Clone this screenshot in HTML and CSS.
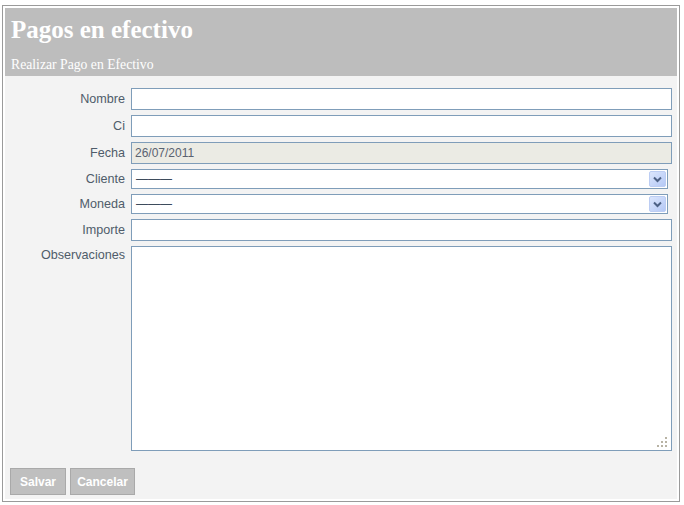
FILE: index.html
```html
<!DOCTYPE html>
<html lang="es">
<head>
<meta charset="utf-8">
<title>Pagos en efectivo</title>
<link rel="stylesheet" href="styles.css">
</head>
<body>
<div class="frame">
  <div class="header">
    <h1 class="title">Pagos en efectivo</h1>
    <div class="subtitle">Realizar Pago en Efectivo</div>
  </div>
  <div class="content">
    <div class="row">
      <label class="label">Nombre</label>
      <div class="input"></div>
    </div>
    <div class="row">
      <label class="label">Ci</label>
      <div class="input"></div>
    </div>
    <div class="row">
      <label class="label">Fecha</label>
      <div class="input disabled">26/07/2011</div>
    </div>
    <div class="row">
      <label class="label">Cliente</label>
      <div class="select"><span class="dash">———</span>
        <svg class="drop" width="17" height="16" viewBox="0 0 17 16"><defs><linearGradient id="g1" x1="0" y1="0" x2="1" y2="1"><stop offset="0" stop-color="#dde7fd"/><stop offset="1" stop-color="#b3c7f5"/></linearGradient></defs><rect x="0.5" y="0.5" width="16" height="15" rx="1.5" fill="url(#g1)" stroke="#bccdf3"/><path d="M5 6.5 L8.5 10 L12 6.5" fill="none" stroke="#4d6185" stroke-width="2"/></svg>
      </div>
    </div>
    <div class="row">
      <label class="label">Moneda</label>
      <div class="select"><span class="dash">———</span>
        <svg class="drop" width="17" height="16" viewBox="0 0 17 16"><defs><linearGradient id="g2" x1="0" y1="0" x2="1" y2="1"><stop offset="0" stop-color="#dde7fd"/><stop offset="1" stop-color="#b3c7f5"/></linearGradient></defs><rect x="0.5" y="0.5" width="16" height="15" rx="1.5" fill="url(#g2)" stroke="#bccdf3"/><path d="M5 6.5 L8.5 10 L12 6.5" fill="none" stroke="#4d6185" stroke-width="2"/></svg>
      </div>
    </div>
    <div class="row">
      <label class="label">Importe</label>
      <div class="input"></div>
    </div>
    <div class="row">
      <label class="label label-top">Observaciones</label>
      <div class="textarea">
        <svg class="grip" width="11" height="11" viewBox="0 0 11 11"><g fill="#b8b3a4"><rect x="8" y="0" width="2" height="2"/><rect x="4" y="4" width="2" height="2"/><rect x="8" y="4" width="2" height="2"/><rect x="0" y="8" width="2" height="2"/><rect x="4" y="8" width="2" height="2"/><rect x="8" y="8" width="2" height="2"/></g></svg>
      </div>
    </div>
    <div class="buttons">
      <button class="btn btn-save">Salvar</button>
      <button class="btn btn-cancel">Cancelar</button>
    </div>
  </div>
</div>
</body>
</html>
```
FILE: styles.css
```css
html, body {
  margin: 0;
  padding: 0;
  background: #ffffff;
}
body {
  padding: 5px 0 0 2px;
  font-family: "Liberation Sans", Arial, sans-serif;
}
.frame {
  box-sizing: border-box;
  width: 678px;
  height: 497px;
  border: 1px solid #9a9a9a;
  padding: 2px;
  background: #ffffff;
  display: flex;
  flex-direction: column;
}
.header {
  background: #bdbdbd;
  height: 68px;
  box-sizing: border-box;
  padding: 8px 0 0 6px;
  color: #ffffff;
}
.title {
  margin: 0;
  font-family: "Liberation Serif", "Times New Roman", serif;
  font-weight: bold;
  font-size: 25px;
  line-height: 28px;
}
.subtitle {
  margin-top: 13px;
  font-family: "Liberation Serif", "Times New Roman", serif;
  font-size: 13.7px;
  line-height: 16px;
}
.content {
  flex: 1;
  background: #f3f3f3;
  padding: 12px 0 0 0;
  display: flex;
  flex-direction: column;
  gap: 5px;
}
.row {
  display: flex;
  align-items: center;
  gap: 6px;
}
.label {
  width: 120px;
  flex: none;
  text-align: right;
  font-size: 12.6px;
  color: #4f5c6a;
}
.label-top {
  align-self: flex-start;
  padding-top: 2px;
}
.input {
  box-sizing: border-box;
  width: 541px;
  height: 22px;
  border: 1px solid #7f9db9;
  background: #ffffff;
  padding: 0 3px;
  font-size: 12px;
  line-height: 20px;
  color: #5a6270;
}
.input.disabled {
  background: #ebebe4;
}
.select {
  box-sizing: border-box;
  width: 537px;
  height: 20px;
  border: 1px solid #7f9db9;
  background: #ffffff;
  display: flex;
  align-items: center;
  justify-content: space-between;
  padding: 0 1px 0 4px;
}
.dash {
  font-size: 12px;
  color: #3d4c5c;
  line-height: 16px;
}
.drop {
  display: block;
}
.textarea {
  position: relative;
  box-sizing: border-box;
  width: 541px;
  height: 205px;
  border: 1px solid #7f9db9;
  background: #ffffff;
}
.grip {
  position: absolute;
  right: 3px;
  bottom: 2px;
}
.buttons {
  display: flex;
  gap: 4px;
  padding: 12px 0 0 5px;
}
.btn {
  box-sizing: border-box;
  height: 27px;
  border: 1px solid #a9a9a9;
  background: #bfbfbf;
  color: #ffffff;
  font-family: "Liberation Sans", Arial, sans-serif;
  font-weight: bold;
  font-size: 12px;
  padding: 0;
}
.btn-save {
  width: 56px;
}
.btn-cancel {
  width: 65px;
}
```
